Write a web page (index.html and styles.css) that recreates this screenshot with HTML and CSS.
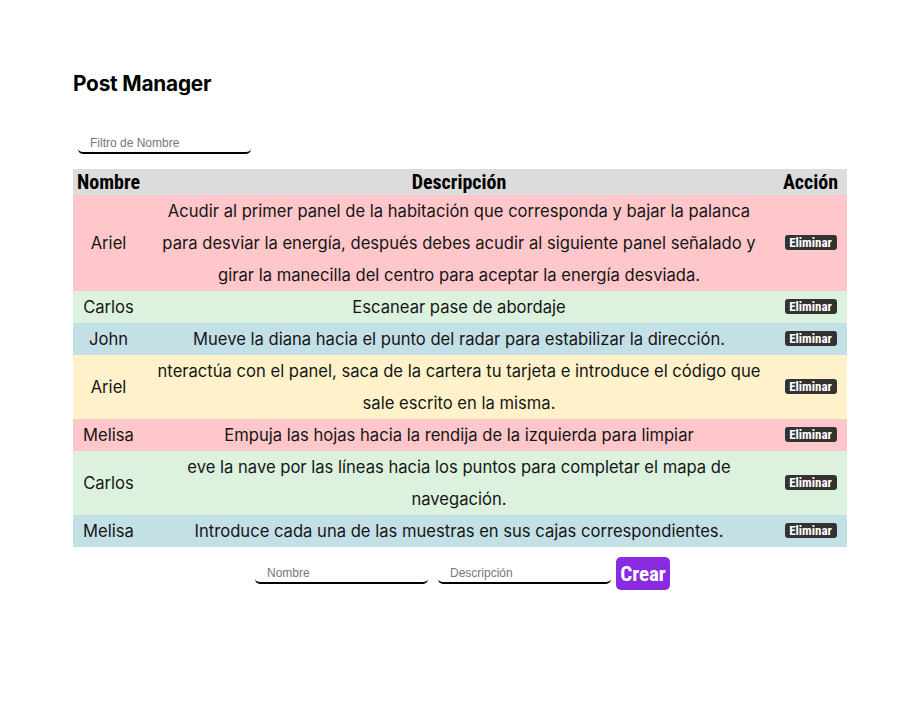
FILE: index.html
```html
<!DOCTYPE html>
<html lang="es">
<head>
<meta charset="utf-8">
<title>Post Manager</title>
<link rel="stylesheet" href="styles.css">
</head>
<body>
<main class="app">
  <h1 class="title">Post Manager</h1>
  <div class="filter">
    <input class="field" type="text" placeholder="Filtro de Nombre">
  </div>
  <table class="posts">
    <colgroup>
      <col class="c-name">
      <col class="c-desc">
      <col class="c-act">
    </colgroup>
    <thead>
      <tr><th>Nombre</th><th>Descripción</th><th>Acción</th></tr>
    </thead>
    <tbody>
      <tr class="pink"><td>Ariel</td><td class="desc">Acudir al primer panel de la habitación que corresponda y bajar la palanca para desviar la energía, después debes acudir al siguiente panel señalado y girar la manecilla del centro para aceptar la energía desviada.</td><td><button class="del">Eliminar</button></td></tr>
      <tr class="green"><td>Carlos</td><td class="desc">Escanear pase de abordaje</td><td><button class="del">Eliminar</button></td></tr>
      <tr class="blue"><td>John</td><td class="desc">Mueve la diana hacia el punto del radar para estabilizar la dirección.</td><td><button class="del">Eliminar</button></td></tr>
      <tr class="yellow"><td>Ariel</td><td class="desc">nteractúa con el panel, saca de la cartera tu tarjeta e introduce el código que sale escrito en la misma.</td><td><button class="del">Eliminar</button></td></tr>
      <tr class="pink"><td>Melisa</td><td class="desc">Empuja las hojas hacia la rendija de la izquierda para limpiar</td><td><button class="del">Eliminar</button></td></tr>
      <tr class="green"><td>Carlos</td><td class="desc">eve la nave por las líneas hacia los puntos para completar el mapa de navegación.</td><td><button class="del">Eliminar</button></td></tr>
      <tr class="blue"><td>Melisa</td><td class="desc">Introduce cada una de las muestras en sus cajas correspondientes.</td><td><button class="del">Eliminar</button></td></tr>
    </tbody>
  </table>
  <form class="create">
    <input class="field" type="text" placeholder="Nombre">
    <input class="field field-last" type="text" placeholder="Descripción">
    <button class="crear" type="button">Crear</button>
  </form>
</main>
</body>
</html>
```

FILE: styles.css
```css
* { box-sizing: border-box; }

body {
  margin: 0;
  background: #ffffff;
  font-family: "Inter", "Noto Sans", sans-serif;
  color: #1b1b1b;
}

.app {
  width: 774px;
  margin-left: 73px;
  padding-top: 68px;
  display: flex;
  flex-direction: column;
}

.title {
  margin: 0;
  font-family: "Inter", sans-serif;
  font-weight: 700;
  font-size: 20.8px;
  line-height: 32px;
  letter-spacing: -0.2px;
  color: #000;
}

.filter {
  margin-top: 33px;
  padding-left: 5px;
  height: 36px;
  display: flex;
  align-items: flex-start;
}

.field {
  display: block;
  width: 173px;
  height: 21px;
  border: none;
  border-bottom: 2px solid #000;
  border-radius: 0 0 5px 5px;
  padding: 0 12px;
  font-family: "Liberation Sans", Arial, sans-serif;
  font-size: 12px;
  color: #222;
  background: transparent;
  outline: none;
}

.field::placeholder { color: #777; }

.posts {
  width: 774px;
  border-collapse: collapse;
  table-layout: fixed;
}

.c-name { width: 71px; }
.c-desc { width: 630px; }
.c-act { width: 73px; }

.posts th {
  background: #dcdcdc;
  font-family: "Roboto Condensed", "DejaVu Sans Condensed", sans-serif;
  font-weight: 700;
  font-size: 20px;
  height: 26px;
  padding: 0;
  line-height: 26px;
  color: #000;
}

.posts td {
  padding: 0;
  text-align: center;
  font-size: 16.6px;
  line-height: 32px;
  color: #161616;
}

.posts td.desc { padding: 0 7px; }

.pink { background: #ffc7ca; }
.green { background: #dcf1de; }
.blue { background: #c4e0e7; }
.yellow { background: #fff2cb; }

.del {
  display: inline-block;
  width: 52px;
  height: 15px;
  margin-bottom: 3px;
  background: #333;
  color: #fff;
  border: none;
  border-radius: 3px;
  font-family: "Roboto Condensed", "DejaVu Sans Condensed", sans-serif;
  font-weight: 700;
  font-size: 13px;
  line-height: 15px;
  padding: 0;
  vertical-align: middle;
}

.create {
  margin: 10px 0 0;
  display: flex;
  justify-content: center;
  align-items: center;
  gap: 10px;
  padding-left: 5px;
}

.field-last { margin-right: -5px; }

.crear {
  background: #8a2be2;
  color: #fff;
  border: none;
  border-radius: 5px;
  width: 54px;
  height: 33px;
  font-family: "Roboto Condensed", "DejaVu Sans Condensed", sans-serif;
  font-weight: 700;
  font-size: 21px;
  padding: 0;
}
```
